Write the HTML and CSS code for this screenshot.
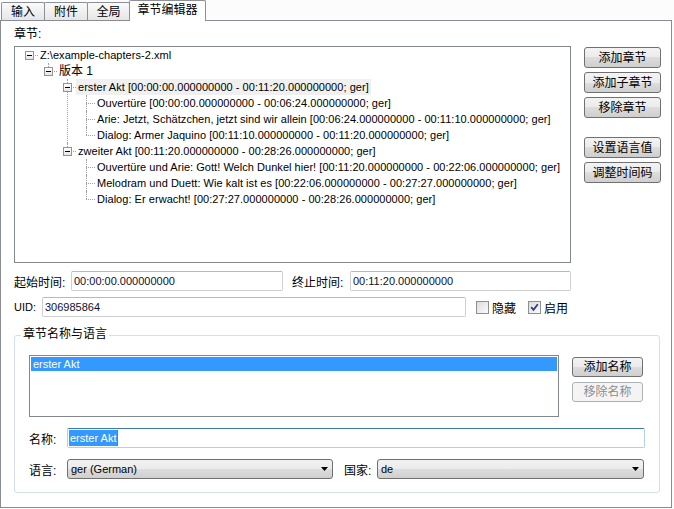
FILE: index.html
```html
<!DOCTYPE html>
<html lang="zh">
<head>
<meta charset="utf-8">
<link rel="stylesheet" href="styles.css">
</head>
<body>
<div class="tabs">
  <div class="tab w44 cjk">输入</div>
  <div class="tab w44 cjk">附件</div>
  <div class="tab w43 cjk">全局</div>
  <div class="tab active cjk">章节编辑器</div>
</div>
<div class="panel">
  <div class="cap cjk">章节:</div>
  <div class="top">
    <div class="tree">
      <ul class="tl rootlist">
        <li class="only">
          <div class="row"><span class="box"></span><span class="lbl">Z:\example-chapters-2.xml</span></div>
          <ul class="tl">
            <li class="last">
              <div class="row"><span class="box"></span><span class="lbl cjk">版本 1</span></div>
              <ul class="tl">
                <li>
                  <div class="row"><span class="box"></span><span class="lbl sel">erster Akt [00:00:00.000000000 - 00:11:20.000000000; ger]</span></div>
                  <ul class="tl">
                    <li><div class="row"><span class="lbl">Ouvertüre [00:00:00.000000000 - 00:06:24.000000000; ger]</span></div></li>
                    <li><div class="row"><span class="lbl">Arie: Jetzt, Schätzchen, jetzt sind wir allein [00:06:24.000000000 - 00:11:10.000000000; ger]</span></div></li>
                    <li class="last"><div class="row"><span class="lbl">Dialog: Armer Jaquino [00:11:10.000000000 - 00:11:20.000000000; ger]</span></div></li>
                  </ul>
                </li>
                <li class="last">
                  <div class="row"><span class="box"></span><span class="lbl">zweiter Akt [00:11:20.000000000 - 00:28:26.000000000; ger]</span></div>
                  <ul class="tl">
                    <li><div class="row"><span class="lbl">Ouvertüre und Arie: Gott! Welch Dunkel hier! [00:11:20.000000000 - 00:22:06.000000000; ger]</span></div></li>
                    <li><div class="row"><span class="lbl">Melodram und Duett: Wie kalt ist es [00:22:06.000000000 - 00:27:27.000000000; ger]</span></div></li>
                    <li class="last"><div class="row"><span class="lbl">Dialog: Er erwacht! [00:27:27.000000000 - 00:28:26.000000000; ger]</span></div></li>
                  </ul>
                </li>
              </ul>
            </li>
          </ul>
        </li>
      </ul>
    </div>
    <div class="btncol">
      <div class="btn cjk">添加章节</div>
      <div class="btn cjk">添加子章节</div>
      <div class="btn cjk">移除章节</div>
      <div class="btn cjk sep">设置语言值</div>
      <div class="btn cjk">调整时间码</div>
    </div>
  </div>
  <div class="frow r1">
    <span class="flabel cjk lab-start">起始时间:</span>
    <div class="input in-start">00:00:00.000000000</div>
    <span class="flabel cjk lab-end">终止时间:</span>
    <div class="input in-end">00:11:20.000000000</div>
  </div>
  <div class="frow r2">
    <span class="flabel lab-uid">UID:</span>
    <div class="input in-uid">306985864</div>
    <span class="chk chk1"></span><span class="cjk chklab">隐藏</span>
    <span class="chk chk2"><svg width="11" height="11" viewBox="0 0 11 11"><path d="M2.2 5.2 L4.5 7.8 L8.8 2.2" fill="none" stroke="#2c3f86" stroke-width="1.8"/></svg></span><span class="cjk chklab">启用</span>
  </div>
  <div class="group">
    <span class="gtitle cjk">章节名称与语言</span>
    <div class="lrow">
      <div class="listbox"><div class="litem">erster Akt</div></div>
      <div class="nbtns">
        <div class="btn nbtn cjk">添加名称</div>
        <div class="btn nbtn dis cjk">移除名称</div>
      </div>
    </div>
    <div class="grow g1">
      <span class="glabel cjk">名称:</span>
      <div class="input focus"><span class="hl">erster Akt</span><span class="caret"></span></div>
    </div>
    <div class="grow g2">
      <span class="glabel cjk">语言:</span>
      <div class="select sel-lang"><span>ger (German)</span><svg class="arrow" width="7" height="4" viewBox="0 0 7 4"><polygon points="0,0 7,0 3.5,4" fill="#000"/></svg></div>
      <span class="glabel cjk lab-country">国家:</span>
      <div class="select sel-country"><span>de</span><svg class="arrow" width="7" height="4" viewBox="0 0 7 4"><polygon points="0,0 7,0 3.5,4" fill="#000"/></svg></div>
    </div>
  </div>
</div>
</body>
</html>
```
FILE: styles.css
```css
* { box-sizing: border-box; margin: 0; padding: 0; }
html, body { width: 674px; height: 509px; overflow: hidden; }
body {
  background: #fcfcfc;
  font-family: "Liberation Sans", "Noto Sans CJK SC", sans-serif;
  font-size: 11px;
  color: #000;
}
.cjk { font-size: 12px; font-family: "Liberation Sans", "Noto Sans CJK SC", sans-serif; }

/* tabs */
.tabs { display: flex; align-items: flex-end; height: 20px; padding-left: 1px; }
.tab {
  height: 18px;
  border: 1px solid #8d9095;
  border-bottom: none;
  border-radius: 2px 2px 0 0;
  margin-right: -1px;
  background: linear-gradient(#fafafa, #e6e6e6);
  display: flex; align-items: center; justify-content: center;
  line-height: 16px;
}
.w44 { width: 44px; }
.w43 { width: 43px; }
.tab.active {
  width: 77px; height: 21px;
  background: #fff;
  margin-bottom: -1px;
  position: relative; z-index: 1;
  padding-bottom: 2px;
}

/* panel */
.panel {
  width: 672px; height: 488px;
  border: 1px solid #898c95;
  background: #fff;
  padding-left: 13px;
}
.cap { height: 25px; padding-top: 6px; line-height: 15px; }
.top { display: flex; height: 217px; }
.tree {
  width: 557px; height: 217px;
  border: 1px solid #828790;
  background: #fff;
  overflow: hidden;
}
.tl { list-style: none; padding-left: 19px; }
.tl.rootlist { padding-left: 10px; }
.tl li { position: relative; }
.tl li::before {
  content: ""; position: absolute; left: 4px; top: 0; bottom: 0;
  border-left: 1px dotted #a0a0a0;
}
.tl li.last::before { bottom: auto; height: 8px; }
.tl li.only::before { display: none; }
.row { position: relative; height: 16px; padding-left: 13px; white-space: nowrap; }
.row::after {
  content: ""; position: absolute; left: 4px; top: 8px; width: 9px;
  border-top: 1px dotted #a0a0a0;
}
.box {
  position: absolute; left: 0; top: 4px; width: 9px; height: 9px;
  border: 1px solid #939393;
  background: linear-gradient(#ffffff, #e6e6e6);
  z-index: 1;
}
.box::after {
  content: ""; position: absolute; left: 1px; top: 3px; width: 5px; height: 1px; background: #000;
}
.lbl { display: inline-block; height: 16px; line-height: 16px; padding: 0 2px; letter-spacing: 0.04px; }
.lbl.cjk { letter-spacing: 0; }
.lbl.sel { background: #f0f0f0; }

.btncol { margin-left: 13px; width: 77px; padding-top: 1px; display: flex; flex-direction: column; gap: 4px; }
.btn {
  height: 21px;
  border: 1px solid #707070;
  border-radius: 3px;
  background: linear-gradient(#f3f3f3 0%, #ebebeb 50%, #dddddd 50%, #cfcfcf 100%);
  display: flex; align-items: center; justify-content: center;
  line-height: 14px;
}
.btn.sep { margin-top: 15px; }

/* form rows */
.frow { display: flex; align-items: center; height: 20px; }
.r1 { margin-top: 8px; width: 557px; }
.r2 { margin-top: 6px; }
.flabel { white-space: nowrap; flex: none; }
.input {
  height: 20px;
  border: 1px solid #cfcfcf;
  border-top-color: #b9b9b9;
  border-radius: 2px;
  background: #fff;
  padding-left: 2px;
  line-height: 18px;
  color: #101030;
  white-space: nowrap;
  flex: none;
}
.lab-start { width: 57px; }
.in-start { width: 212px; }
.lab-end { margin-left: 9px; width: 58px; }
.in-end { flex: 1; }
.lab-uid { width: 28px; }
.in-uid { width: 424px; }
.chk {
  flex: none;
  width: 13px; height: 13px;
  border: 1px solid #8e8f8f;
  background: linear-gradient(135deg, #dcdcdc, #fbfbfb);
  display: inline-flex; align-items: center; justify-content: center;
}
.chk1 { margin-left: 10px; }
.chk2 { margin-left: 12px; }
.chklab { margin-left: 3px; white-space: nowrap; }

/* group */
.group {
  position: relative;
  margin-top: 18px;
  width: 646px; height: 158px;
  border: 1px solid #d5dfe5;
  border-radius: 3px;
  padding: 19px 0 0 14px;
}
.gtitle {
  position: absolute; left: 6px; top: -9px;
  background: #fff; padding: 0 2px; line-height: 15px;
}
.lrow { display: flex; height: 62px; }
.listbox {
  width: 530px; height: 62px;
  border: 1px solid #828790;
  padding: 1px;
  background: #fff;
}
.litem { height: 14px; line-height: 14px; background: #3399ff; color: #fff; padding-left: 2px; }
.nbtns { margin-left: 13px; padding-top: 2px; display: flex; flex-direction: column; gap: 5px; }
.nbtn { width: 71px; height: 20px; }
.nbtn.dis { border-color: #adb2b5; background: #f4f4f4; color: #8d8d8d; }

.grow { display: flex; align-items: center; height: 20px; }
.g1 { margin-top: 11px; }
.g2 { margin-top: 11px; }
.glabel { width: 38px; white-space: nowrap; flex: none; }
.input.focus {
  width: 578px;
  border-color: #b5cfe7;
  border-top-color: #3d7bad;
  display: flex; align-items: center;
  padding-left: 1px;
}
.hl { background: #3399ff; color: #fff; height: 16px; line-height: 16px; padding: 0 1px; }
.caret { width: 1px; height: 16px; background: #c0661a; }
.select {
  flex: none;
  height: 20px;
  border: 1px solid #707070;
  border-radius: 3px;
  background: linear-gradient(#f2f2f2 0%, #ebebeb 50%, #dddddd 50%, #cfcfcf 100%);
  display: flex; align-items: center; justify-content: space-between;
  padding: 0 4px 0 3px;
  white-space: nowrap;
}
.sel-lang { width: 266px; }
.lab-country { width: 33px; margin-left: 11px; }
.sel-country { width: 267px; }
.arrow { display: block; }
```
